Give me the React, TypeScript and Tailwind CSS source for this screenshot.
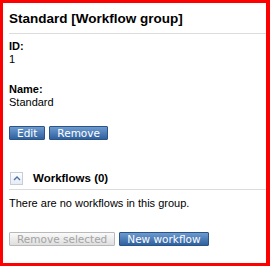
import React from 'react';

const blueBtn =
  'h-[14px] px-[7px] border border-[#2b5386] bg-gradient-to-b from-[#6d9bd0] to-[#2f619e] text-white text-[10.5px] leading-[12px] rounded-[1px]';
const greyBtn =
  'h-[14px] px-[7px] border border-[#b9b9b9] bg-gradient-to-b from-[#fafafa] to-[#dedede] text-[#a3a3a3] text-[10.5px] leading-[12px] rounded-[1px]';

function Field({ label, value }: { label: string; value: string }) {
  return (
    <div className="flex flex-col text-[11px] leading-[13px]">
      <span className="font-bold">{label}</span>
      <span>{value}</span>
    </div>
  );
}

export default function App() {
  return (
    <div
      className="w-[270px] h-[266px] bg-white border-[#ff0000] border-t-[3px] border-l-[3px] border-r-[4px] border-b-[3px] text-black"
      style={{ fontFamily: '"Liberation Sans", Arial, sans-serif' }}
    >
      <div className="flex flex-col pl-[6px] pt-[8px]">
        <h1 className="text-[13.5px] leading-[16px] font-bold pb-[6px] border-b border-[#dcdcdc]">
          Standard [Workflow group]
        </h1>

        <div className="mt-[6px]">
          <Field label="ID:" value="1" />
        </div>
        <div className="mt-[17px]">
          <Field label="Name:" value="Standard" />
        </div>

        <div className="mt-[17px] flex gap-[4px]" style={{ fontFamily: '"DejaVu Sans", Verdana, sans-serif' }}>
          <button className={blueBtn}>Edit</button>
          <button className={blueBtn}>Remove</button>
        </div>

        <div className="mt-[29px] flex items-center h-[21px] pb-[2px] border-b border-[#dcdcdc]">
          <span className="ml-[1px] w-[13px] h-[13px] flex items-center justify-center border border-[#c5cdd9] bg-gradient-to-b from-white to-[#e6ecf4]">
            <svg width="8" height="6" viewBox="0 0 8 6">
              <path d="M1 5 L4 2 L7 5" fill="none" stroke="#4d72a8" strokeWidth="1.4" />
            </svg>
          </span>
          <span className="ml-[10px] text-[11.5px] font-bold leading-[13px]">Workflows (0)</span>
        </div>

        <p className="mt-[7px] text-[11px] leading-[13px]">There are no workflows in this group.</p>

        <div className="mt-[22px] flex gap-[4px]" style={{ fontFamily: '"DejaVu Sans", Verdana, sans-serif' }}>
          <button className={greyBtn} disabled>
            Remove selected
          </button>
          <button className={blueBtn}>New workflow</button>
        </div>
      </div>
    </div>
  );
}
